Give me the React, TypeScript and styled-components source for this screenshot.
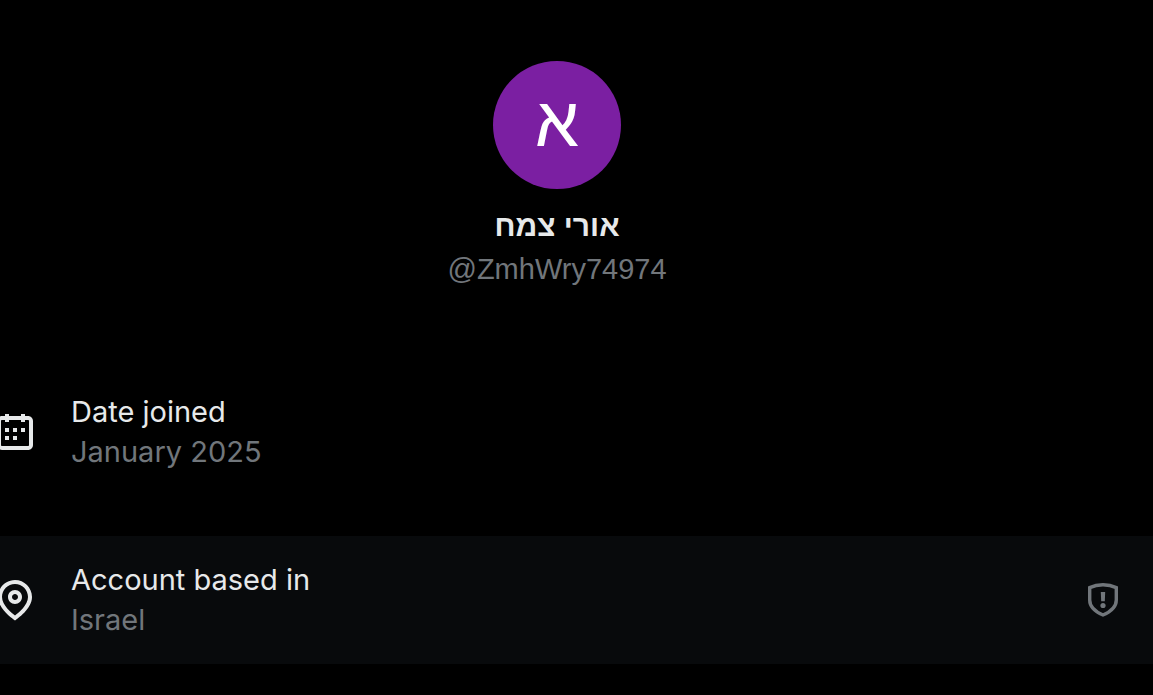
import React from "react";
import styled, { createGlobalStyle } from "styled-components";

const GlobalStyle = createGlobalStyle`
  * { box-sizing: border-box; }
  body {
    margin: 0;
    background: #000;
    color: #e7e9ea;
    font-family: Inter, "Liberation Sans", sans-serif;
    font-size: 29px;
    line-height: 40px;
    overflow-x: hidden;
  }
`;

const Panel = styled.main`
  margin-left: -9px;
`;

const Profile = styled.header`
  display: flex;
  flex-direction: column;
  align-items: center;
  padding: 61px 30px 79px 0;
`;

const Avatar = styled.div`
  display: flex;
  align-items: center;
  justify-content: center;
  width: 128px;
  height: 128px;
  padding-bottom: 6px;
  border-radius: 50%;
  background: #7b1fa2;
  color: #fff;
  font-family: "Liberation Sans", Arial, sans-serif;
  font-size: 70px;
  line-height: 1;
`;

const Name = styled.h1`
  margin: 16px 0 2px;
  font-family: "Liberation Sans", Arial, sans-serif;
  font-size: 30px;
  font-weight: 700;
  line-height: 42px;
`;

const Handle = styled.span`
  color: #71767b;
  font-family: "Liberation Sans", Arial, sans-serif;
`;

const Details = styled.section`
  display: flex;
  flex-direction: column;
  gap: 40px;
`;

const Row = styled.div<{ $highlighted?: boolean }>`
  display: flex;
  align-items: center;
  gap: 32px;
  padding: 24px 30px 24px 0;
  background: ${(p) => (p.$highlighted ? "#080a0c" : "transparent")};
`;

const RowText = styled.div`
  flex: 1;
`;

const Label = styled.div``;

const Value = styled.div`
  color: #71767b;
`;

const Icon = styled.svg<{ $size: number }>`
  display: block;
  flex: none;
  width: ${(p) => p.$size}px;
  height: ${(p) => p.$size}px;
`;

const InfoButton = styled.button`
  padding: 0;
  border: 0;
  background: none;
  color: #71767b;
  cursor: pointer;
`;

const CalendarIcon = () => (
  <Icon $size={48} viewBox="0 0 24 24" fill="currentColor" aria-hidden="true">
    <path d="M7 4V3h2v1h6V3h2v1h1.5C19.89 4 21 5.12 21 6.5v12c0 1.38-1.11 2.5-2.5 2.5h-13C4.12 21 3 19.88 3 18.5v-12C3 5.12 4.12 4 5.5 4H7zm0 2H5.5c-.27 0-.5.22-.5.5v12c0 .28.23.5.5.5h13c.28 0 .5-.22.5-.5v-12c0-.28-.22-.5-.5-.5H17v1h-2V6H9v1H7V6zm0 6h2v-2H7v2zm0 4h2v-2H7v2zm4-4h2v-2h-2v2zm0 4h2v-2h-2v2zm4-4h2v-2h-2v2z" />
  </Icon>
);

const PinIcon = () => (
  <Icon $size={48} viewBox="0 0 24 24" fill="currentColor" aria-hidden="true">
    <path d="M12 7c-1.93 0-3.5 1.57-3.5 3.5S10.07 14 12 14s3.5-1.57 3.5-3.5S13.93 7 12 7zm0 5c-.827 0-1.5-.673-1.5-1.5S11.173 9 12 9s1.5.673 1.5 1.5S12.827 12 12 12zm0-10c-4.687 0-8.5 3.813-8.5 8.5 0 5.967 7.621 11.116 7.945 11.332l.555.37.555-.37c.324-.216 7.945-5.365 7.945-11.332C20.5 5.813 16.687 2 12 2zm0 17.77c-1.665-1.241-6.5-5.196-6.5-9.27C5.5 6.916 8.416 4 12 4s6.5 2.916 6.5 6.5c0 4.073-4.835 8.028-6.5 9.27z" />
  </Icon>
);

const ShieldIcon = () => (
  <Icon $size={40} viewBox="0 0 40 40" fill="none" aria-hidden="true">
    <path
      d="M20 4.8c4.6 0 9.2.9 13.3 2.8V20c0 6.6-4.8 11.4-13.3 15C11.5 31.4 6.7 26.6 6.7 20V7.6C10.8 5.7 15.4 4.8 20 4.8z"
      stroke="currentColor"
      strokeWidth="3.4"
    />
    <path d="M17.8 12h4.4l-.4 9.2h-3.6z" fill="currentColor" />
    <circle cx="20" cy="25.5" r="2.6" fill="currentColor" />
  </Icon>
);

export default function App() {
  return (
    <>
      <GlobalStyle />
      <Panel>
        <Profile>
          <Avatar aria-hidden="true">א</Avatar>
          <Name dir="rtl" lang="he">אורי צמח</Name>
          <Handle>@ZmhWry74974</Handle>
        </Profile>
        <Details>
          <Row>
            <CalendarIcon />
            <RowText>
              <Label>Date joined</Label>
              <Value>January 2025</Value>
            </RowText>
          </Row>
          <Row $highlighted>
            <PinIcon />
            <RowText>
              <Label>Account based in</Label>
              <Value>Israel</Value>
            </RowText>
            <InfoButton type="button" aria-label="About this location">
              <ShieldIcon />
            </InfoButton>
          </Row>
        </Details>
      </Panel>
    </>
  );
}
